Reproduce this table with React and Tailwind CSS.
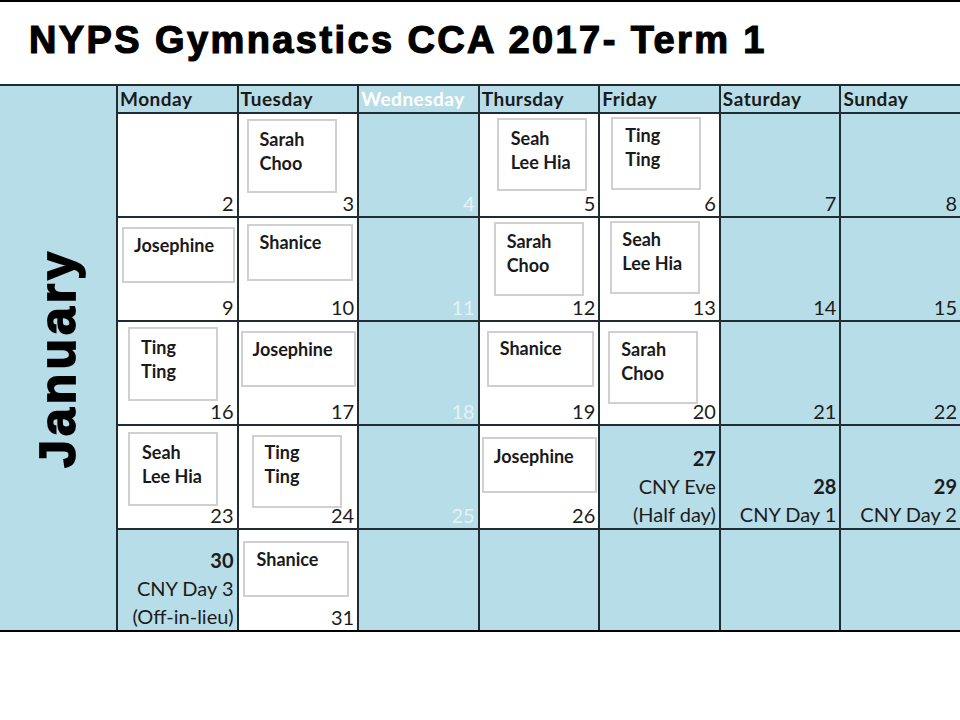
const BODY = "font-['Lato','Noto_Sans',sans-serif]";

const W = "w";
const B = "b";
const WED = "wed";

const rows = [
  [
    { d: 2, t: W },
    { d: 3, t: W, names: ["Sarah", "Choo"], box: "ml-[8px] mt-[5px] w-[90px] h-[74px] pt-[6px] pl-[11px]" },
    { d: 4, t: WED },
    { d: 5, t: W, names: ["Seah", "Lee Hia"], box: "ml-[17px] mt-[4px] w-[90px] h-[73px] pt-[6px] pl-[12px]" },
    { d: 6, t: W, names: ["Ting", "Ting"], box: "ml-[11px] mt-[3px] w-[90px] h-[73px] pt-[4px] pl-[12px]" },
    { d: 7, t: B },
    { d: 8, t: B },
  ],
  [
    { d: 9, t: W, names: ["Josephine"], box: "ml-[4px] mt-[9px] w-[113px] h-[56px] pt-[4px] pl-[10px]" },
    { d: 10, t: W, names: ["Shanice"], box: "ml-[8px] mt-[6px] w-[106px] h-[57px] pt-[4px] pl-[11px]" },
    { d: 11, t: WED },
    { d: 12, t: W, names: ["Sarah", "Choo"], box: "ml-[14px] mt-[4px] w-[90px] h-[74px] pt-[5px] pl-[11px]" },
    { d: 13, t: W, names: ["Seah", "Lee Hia"], box: "ml-[10px] mt-[3px] w-[90px] h-[73px] pt-[4px] pl-[10px]" },
    { d: 14, t: B },
    { d: 15, t: B },
  ],
  [
    { d: 16, t: W, names: ["Ting", "Ting"], box: "ml-[10px] mt-[5px] w-[90px] h-[74px] pt-[6px] pl-[11px]" },
    { d: 17, t: W, names: ["Josephine"], box: "ml-[2px] mt-[9px] w-[115px] h-[56px] pt-[4px] pl-[10px]" },
    { d: 18, t: WED },
    { d: 19, t: W, names: ["Shanice"], box: "ml-[7px] mt-[9px] w-[107px] h-[56px] pt-[3px] pl-[11px]" },
    { d: 20, t: W, names: ["Sarah", "Choo"], box: "ml-[8px] mt-[9px] w-[90px] h-[73px] pt-[4px] pl-[11px]" },
    { d: 21, t: B },
    { d: 22, t: B },
  ],
  [
    { d: 23, t: W, names: ["Seah", "Lee Hia"], box: "ml-[10px] mt-[6px] w-[90px] h-[74px] pt-[6px] pl-[12px]" },
    { d: 24, t: W, names: ["Ting", "Ting"], box: "ml-[13px] mt-[9px] w-[90px] h-[73px] pt-[3px] pl-[11px]" },
    { d: 25, t: WED },
    { d: 26, t: W, names: ["Josephine"], box: "ml-[2px] mt-[11px] w-[115px] h-[56px] pt-[5px] pl-[10px]" },
    { d: 27, t: B, notes: ["CNY Eve", "(Half day)"] },
    { d: 28, t: B, notes: ["CNY Day 1"] },
    { d: 29, t: B, notes: ["CNY Day 2"] },
  ],
  [
    { d: 30, t: B, notes: ["CNY Day 3", "(Off-in-lieu)"] },
    { d: 31, t: W, names: ["Shanice"], box: "ml-[4px] mt-[11px] w-[106px] h-[56px] pt-[4px] pl-[12px]" },
    { t: WED },
    { t: B },
    { t: B },
    { t: B },
    { t: B },
  ],
];

const days = ["Monday", "Tuesday", "Wednesday", "Thursday", "Friday", "Saturday", "Sunday"];

function DayCell({ cell }) {
  const bg = cell.t === W ? "bg-white" : "bg-[#b7dde8]";
  const numColor = cell.t === WED ? "text-[#e4f2f6]" : "text-[#1c1c1c]";

  if (cell.notes) {
    return (
      <div className={`${bg} flex flex-col justify-end items-end pr-[3px] text-[20px] leading-[28px] text-[#1c1c1c]`}>
        <span className="font-bold">{cell.d}</span>
        {cell.notes.map((n) => (
          <span key={n}>{n}</span>
        ))}
      </div>
    );
  }

  // box and date share one grid area so the date stays pinned to the bottom edge
  return (
    <div className={`${bg} grid min-w-0`}>
      {cell.names && (
        <div className={`${cell.box} row-start-1 col-start-1 self-start bg-white border-2 border-[#d0d0d0] text-[18px] leading-[24px] font-bold text-[#1a1a1a]`}>
          {cell.names.map((n, i) => (
            <div key={i}>{n}</div>
          ))}
        </div>
      )}
      {cell.d && (
        <div className={`row-start-1 col-start-1 self-end text-right pr-[3px] pb-[3px] text-[20px] leading-none ${numColor}`}>{cell.d}</div>
      )}
    </div>
  );
}

export default function App() {
  return (
    <div className={`w-[960px] h-[720px] bg-white overflow-hidden ${BODY}`}>
      <div className="h-[84px] border-t-2 border-black pt-[19px] pl-[29px]">
        <h1 className="font-['Liberation_Sans',Arial,sans-serif] font-bold text-[38px] leading-none tracking-[2.4px] text-black [-webkit-text-stroke:1.2px_black]">
          NYPS Gymnastics CCA 2017- Term 1
        </h1>
      </div>

      <div className="grid grid-cols-[116px_repeat(7,1fr)] grid-rows-[26px_repeat(4,102px)_100px] gap-[2px] bg-[#1f2d33] border-t-2 border-t-[#1f2d33] border-b-2 border-b-black">
        <div className="row-span-6 bg-[#b7dde8] flex items-center justify-center">
          <span className="[writing-mode:vertical-rl] rotate-180 font-['Liberation_Sans',Arial,sans-serif] font-bold text-[50px] leading-none tracking-[4px] text-black [-webkit-text-stroke:1.8px_black]">
            January
          </span>
        </div>

        {days.map((d) => (
          <div
            key={d}
            className={`bg-[#b7dde8] pl-[2px] text-[19px] leading-[26px] tracking-[0.5px] font-bold ${d === "Wednesday" ? "text-white" : "text-[#1a1a1a]"}`}
          >
            {d}
          </div>
        ))}

        {rows.map((row, ri) => row.map((cell, ci) => <DayCell key={`${ri}-${ci}`} cell={cell} />))}
      </div>
    </div>
  );
}
